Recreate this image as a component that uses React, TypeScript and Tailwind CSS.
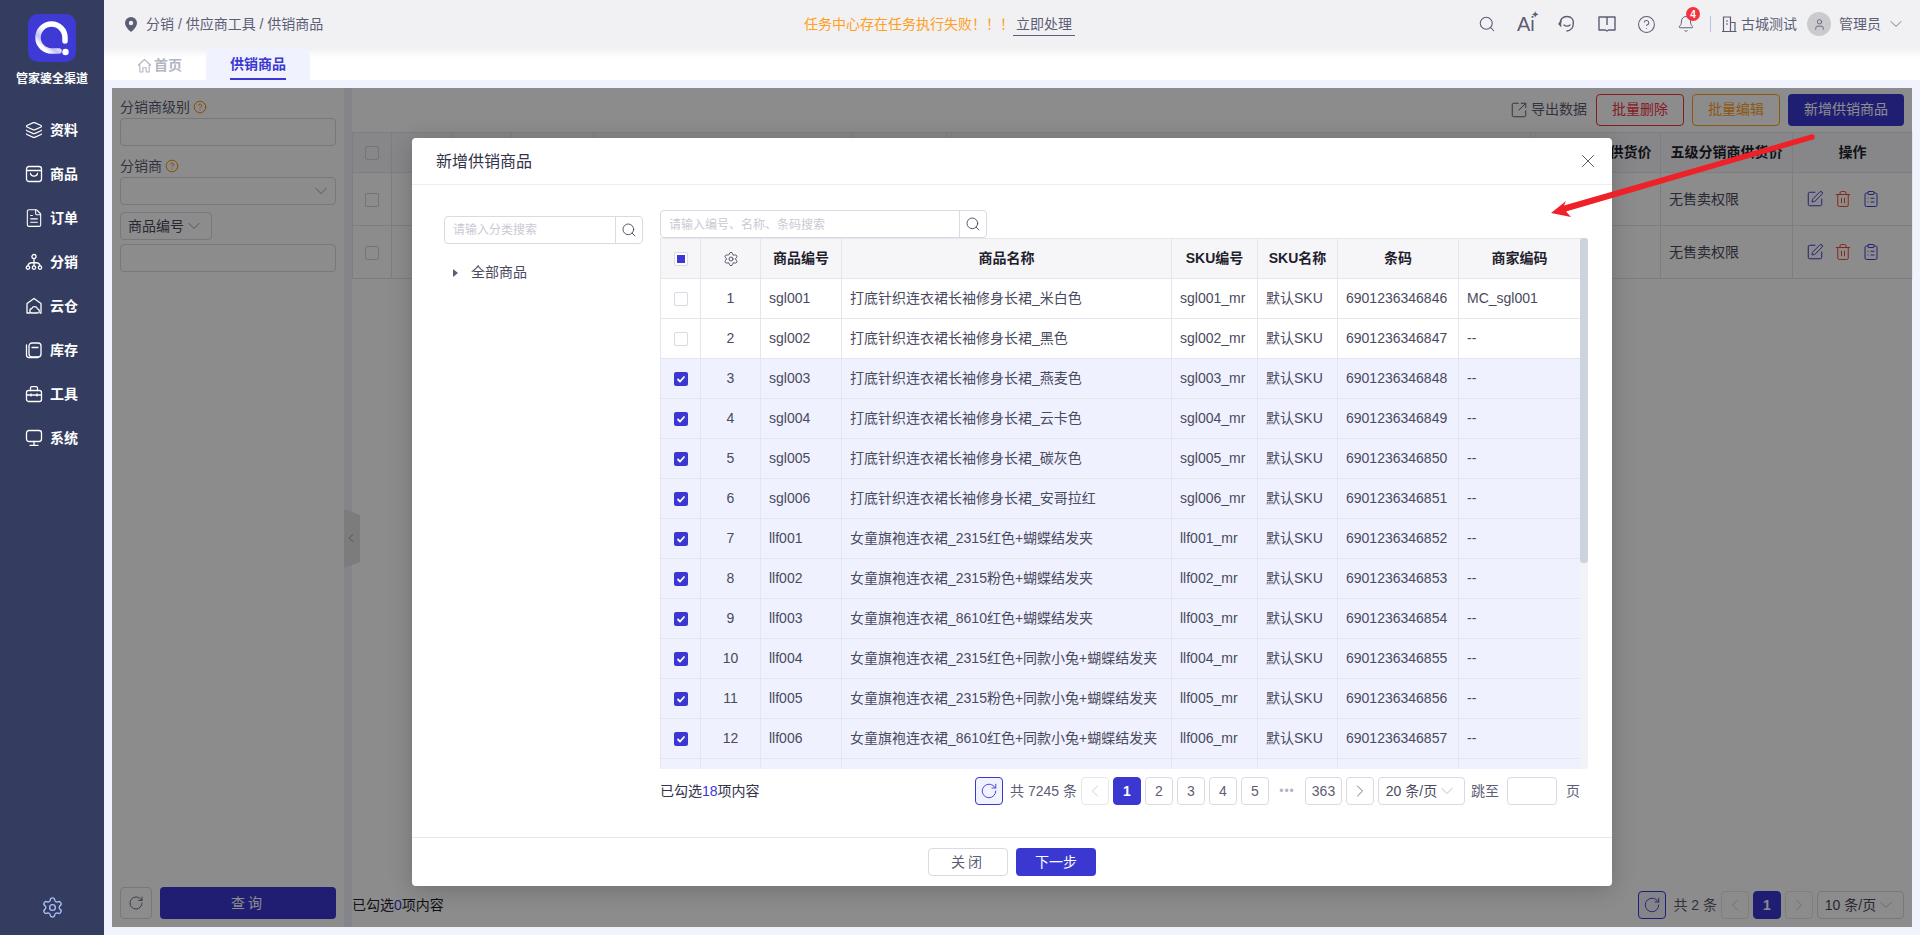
import { Bell, ChevronDown, ChevronLeft, ChevronRight, CircleHelp, FileText, Layers, Monitor, RotateCw, Search, Settings, SquareArrowOutUpRight, SquarePen, Trash2, ClipboardList, User, X } from 'lucide-react';
import type { ReactNode } from 'react';

const goods = [
  ['sgl001', '打底针织连衣裙长袖修身长裙_米白色', '6901236346846', 'MC_sgl001', false],
  ['sgl002', '打底针织连衣裙长袖修身长裙_黑色', '6901236346847', '--', false],
  ['sgl003', '打底针织连衣裙长袖修身长裙_燕麦色', '6901236346848', '--', true],
  ['sgl004', '打底针织连衣裙长袖修身长裙_云卡色', '6901236346849', '--', true],
  ['sgl005', '打底针织连衣裙长袖修身长裙_碳灰色', '6901236346850', '--', true],
  ['sgl006', '打底针织连衣裙长袖修身长裙_安哥拉红', '6901236346851', '--', true],
  ['llf001', '女童旗袍连衣裙_2315红色+蝴蝶结发夹', '6901236346852', '--', true],
  ['llf002', '女童旗袍连衣裙_2315粉色+蝴蝶结发夹', '6901236346853', '--', true],
  ['llf003', '女童旗袍连衣裙_8610红色+蝴蝶结发夹', '6901236346854', '--', true],
  ['llf004', '女童旗袍连衣裙_2315红色+同款小兔+蝴蝶结发夹', '6901236346855', '--', true],
  ['llf005', '女童旗袍连衣裙_2315粉色+同款小兔+蝴蝶结发夹', '6901236346856', '--', true],
  ['llf006', '女童旗袍连衣裙_8610红色+同款小兔+蝴蝶结发夹', '6901236346857', '--', true],
] as const;

function NavIcon({ children }: { children: ReactNode }) {
  return (
    <svg className="shrink-0" width="18" height="18" viewBox="0 0 18 18" fill="none" stroke="currentColor" strokeWidth="1.3" strokeLinecap="round" strokeLinejoin="round">
      {children}
    </svg>
  );
}

const navItems: { label: string; icon: ReactNode }[] = [
  { label: '资料', icon: <Layers className="shrink-0" size={18} strokeWidth={1.5} /> },
  { label: '商品', icon: <NavIcon><rect x="1.5" y="1.500" width="15" height="15" rx="2.5" /><path d="M1.5 5.5h15M5.5 8.5c.6 3.6 6.400 3.6 7 0" /></NavIcon> },
  { label: '订单', icon: <FileText className="shrink-0" size={20} strokeWidth={1.3} /> },
  { label: '分销', icon: <NavIcon><circle cx="9" cy="3.6" r="2.1" /><circle cx="3" cy="14.6" r="1.7" /><circle cx="9" cy="14.6" r="1.7" /><circle cx="15" cy="14.6" r="1.7" /><path d="M9 5.7v7.200M3 12.900c0-2.600 1.600-3.400 6-3.400s6 .8 6 3.400" /></NavIcon> },
  { label: '云仓', icon: <NavIcon><path d="M5 16H2V6.5L9 1.500l7 5V16h-1" /><path d="M6.500 16a2.300 2.300 0 0 1 .3-4.500 3 3 0 0 1 5.700.4 2.100 2.100 0 0 1 .3 4.100z" /></NavIcon> },
  { label: '库存', icon: <NavIcon><rect x="4" y="2" width="12" height="14" rx="3" /><path d="M7 6.500h6M1.500 4v10c0 1.500 1 2.500 2.500 2.500h9" /></NavIcon> },
  { label: '工具', icon: <NavIcon><rect x="1.500" y="5.500" width="15" height="11" rx="2" /><path d="M5.500 5.500V3c0-.8.6-1.400 1.400-1.400h4.200c.8 0 1.400.6 1.400 1.400v2.500M1.500 10h15M6 9v2M12 9v2" /></NavIcon> },
  { label: '系统', icon: <NavIcon><rect x="1.500" y="1.500" width="15" height="11" rx="2.500" /><path d="M9 12.500v3.500M5 16.300h8" /></NavIcon> },
];

function Sidebar() {
  return (
    <aside className="flex w-[104px] shrink-0 flex-col items-center bg-[#343d5f] text-white">
      <svg className="mt-[14px] shrink-0" width="48" height="48" viewBox="0 0 48 48">
        <defs>
          <linearGradient id="logoRing" x1="0.9" y1="0.1" x2="0.2" y2="0.9">
            <stop offset="0.45" stopColor="#ffffff" />
            <stop offset="0.8" stopColor="#c3c2f2" />
            <stop offset="1" stopColor="#ffffff" />
          </linearGradient>
        </defs>
        <rect width="48" height="48" rx="10" fill="#3f3ad6" />
        <path d="M37 27v-3.500A13.500 13.500 0 1 0 23.500 37H31" fill="none" stroke="url(#logoRing)" strokeWidth="5.5" strokeLinecap="round" />
        <circle cx="37.500" cy="38" r="3.200" fill="#fff" />
      </svg>
      <div className="mt-[9px] text-[12px] leading-4 font-bold">管家婆全渠道</div>
      <nav className="mt-[21px] ml-[2px] flex flex-col">
        {navItems.map((item) => (
          <div key={item.label} className="flex h-11 w-[56px] items-center gap-2">
            <span className="flex w-[17px] justify-center">{item.icon}</span>
            <span className="text-[14px] font-bold whitespace-nowrap">{item.label}</span>
          </div>
        ))}
      </nav>
      <Settings className="mt-auto mb-[16px] text-[#a9c1ff]" size={23} strokeWidth={1.4} />
    </aside>
  );
}

function HeaderBar() {
  return (
    <header className="flex h-12 shrink-0 items-center bg-[#f1f1f4] text-[14px] text-[#5d5d75]">
      <div className="flex w-[700px] items-center pl-[21px]">
        <svg width="12" height="15" viewBox="0 0 12 15" className="mr-[9px]">
          <path d="M6 0a6 6 0 0 1 6 6c0 3.600-4 7.400-6 9-2-1.600-6-5.400-6-9a6 6 0 0 1 6-6z" fill="#5d5d75" />
          <circle cx="6" cy="6" r="2.200" fill="#f1f1f4" />
        </svg>
        <span>分销 / 供应商工具 / 供销商品</span>
      </div>
      <div className="flex w-[280px] items-center">
        <span className="w-[209px] whitespace-nowrap text-[#ff9f1a]">任务中心存在任务执行失败！！！</span>
        <span className="border-b border-[#5d5d75] px-[3px] leading-[22px] whitespace-nowrap">立即处理</span>
      </div>
      <div className="flex flex-1 items-center pl-[394px]">
        <Search className="shrink-0" size={18} strokeWidth={1.4} />
        <span className="relative ml-[21px] w-[20px] text-[20px] leading-none">
          Ai
          <span className="absolute -top-[4px] left-[14px] text-[10px]">✦</span>
        </span>
        <svg className="ml-[21px] shrink-0" width="18" height="18" viewBox="0 0 18 18" fill="none" stroke="currentColor" strokeWidth="1.4" strokeLinecap="round">
          <path d="M2.500 9.500C1.500 4 5 1.500 9 1.500s7 2.500 6.300 7.500c-.3 3.500-2.500 6.500-6.300 7" />
          <path d="M3 6.500 1 9l2 2M6 10c1.500 1.500 4.500 1.500 6 0" />
        </svg>
        <svg className="ml-[22px] shrink-0" width="18" height="16" viewBox="0 0 18 16" fill="none" stroke="currentColor" strokeWidth="1.4" strokeLinejoin="round">
          <path d="M1 1h16v13H10.500L9 15l-1.500-1H1zM9 1v8" />
        </svg>
        <CircleHelp className="ml-[21px] shrink-0" size={19} strokeWidth={1.3} />
        <span className="relative ml-[21px] flex">
          <Bell size={18} strokeWidth={1.3} />
          <span className="absolute -top-[8px] left-[9px] flex h-[14px] w-[14px] items-center justify-center rounded-full bg-[#f5333f] text-[10px] font-bold text-white">4</span>
        </span>
        <span className="ml-[15px] h-4 w-px bg-[#b7c0e6]" />
        <svg className="ml-[10px] shrink-0" width="16" height="16" viewBox="0 0 16 16" fill="none" stroke="currentColor" strokeWidth="1.2">
          <path d="M1 15.500h14.500M2.500 15.500V1h7v14.500M9.500 6.500h4.500v9M5 5h2M5 8h2" />
        </svg>
        <span className="ml-[4px] whitespace-nowrap">古城测试</span>
        <span className="ml-[10px] flex h-6 w-6 shrink-0 items-center justify-center rounded-full bg-[#cbcbce]">
          <User size={13} strokeWidth={1.6} />
        </span>
        <span className="ml-2 whitespace-nowrap">管理员</span>
        <ChevronDown className="ml-[5px] shrink-0" size={20} strokeWidth={1} />
      </div>
    </header>
  );
}

function Tabs() {
  return (
    <div className="flex h-8 shrink-0 bg-[linear-gradient(#f1f1f4,#ffffff_10px)] pl-[33px] text-[14px]">
      <div className="flex w-[69px] items-center gap-[2px] pt-[2px] font-bold text-[#b2b5c2]">
        <svg width="15" height="15" viewBox="0 0 15 15" fill="none" stroke="#b2b5c2" strokeWidth="1.1" strokeLinejoin="round">
          <path d="M1 7.500 7.500 1.500l6.500 6M2.800 6.500v7.500h3V9.800h3.400V14h3V6.500" />
        </svg>
        <span className="whitespace-nowrap">首页</span>
      </div>
      <div className="flex w-[104px] justify-center rounded-t-[10px] bg-[#f0f2fd]">
        <span className="flex h-8 items-center border-b-2 border-[#3b38d2] pt-[2px] font-bold text-[#3b38d2]">供销商品</span>
      </div>
    </div>
  );
}

function Label({ text }: { text: string }) {
  return (
    <div className="mb-[2px] flex h-[18px] items-center gap-[3px] text-[14px] text-[#5d5d75]">
      {text}
      <CircleHelp className="text-[#f08c00]" size={14} strokeWidth={1.6} />
    </div>
  );
}

const bgCols = [39, 60, 60, 82, 258, 95, 584, 130, 132, 120];

function BackgroundRow() {
  return (
    <tr className="h-[53px]">
      <td className="border border-[#e5e6ec] text-center">
        <span className="inline-block h-[14px] w-[14px] rounded-[2px] border border-[#d5d6dd] align-middle" />
      </td>
      {[0, 1, 2, 3, 4, 5, 6].map((i) => (
        <td key={i} className="border border-[#e5e6ec]" />
      ))}
      <td className="border border-[#e5e6ec] pl-2 text-[#4a4a5e]">无售卖权限</td>
      <td className="border border-[#e5e6ec]">
        <div className="flex justify-center gap-[10px] pr-[20px]">
          <SquarePen className="text-[#3b38d2]" size={18} strokeWidth={1.3} />
          <Trash2 className="text-[#ee4b2b]" size={18} strokeWidth={1.3} />
          <ClipboardList className="text-[#3b38d2]" size={18} strokeWidth={1.3} />
        </div>
      </td>
    </tr>
  );
}

function PageBtn({ children, active, muted, className = 'w-7' }: { children?: ReactNode; active?: boolean; muted?: boolean; className?: string }) {
  return (
    <span
      className={`flex h-7 shrink-0 items-center justify-center rounded-[4px] border text-[14px] ${className} ${
        active ? 'border-[#3b38d2] bg-[#3b38d2] font-bold text-white' : muted ? 'border-[#e6e7ec] text-[#c4c5cf]' : 'border-[#d9dae2] text-[#5d5d75]'
      }`}
    >
      {children}
    </span>
  );
}

function Background() {
  return (
    <div className="flex h-full bg-[#f0f2fd]">
      <div className="flex w-[232px] flex-col bg-white px-2 pt-[10px] pb-2">
        <Label text="分销商级别" />
        <div className="h-7 rounded-[4px] border border-[#d9dae2]" />
        <div className="h-[11px]" />
        <Label text="分销商" />
        <div className="flex h-7 items-center justify-end rounded-[4px] border border-[#d9dae2] pr-1 text-[#8a8a98]">
          <ChevronDown size={20} strokeWidth={1} />
        </div>
        <div className="mt-[7px] flex h-7 w-[92px] items-center justify-center rounded-[4px] border border-[#d9dae2] text-[14px] text-[#4a4a5e]">
          商品编号
          <ChevronDown className="text-[#8a8a98]" size={20} strokeWidth={1} />
        </div>
        <div className="mt-1 h-7 rounded-[4px] border border-[#d9dae2]" />
        <div className="mt-auto flex gap-2">
          <span className="flex h-8 w-8 items-center justify-center rounded-[4px] border border-[#d9dae2] text-[#4a4a5e]">
            <RotateCw size={16} strokeWidth={1.2} />
          </span>
          <span className="flex h-8 flex-1 items-center justify-center rounded-[4px] bg-[#3b38d2] text-[14px] tracking-[3px] text-white">查询</span>
        </div>
      </div>
      <div className="w-2 shrink-0" />
      <div className="flex min-w-0 flex-1 flex-col bg-white text-[14px]">
        <div className="flex h-11 shrink-0 items-center justify-end gap-2 pr-2 pb-[1px]">
          <span className="mr-[1px] flex items-center gap-[3px] text-[#5d5d75]">
            <SquareArrowOutUpRight size={18} strokeWidth={1.3} />
            导出数据
          </span>
          <span className="flex h-8 w-[88px] items-center justify-center rounded-[4px] border border-[#f5333f] text-[#f5333f]">批量删除</span>
          <span className="flex h-8 w-[88px] items-center justify-center rounded-[4px] border border-[#ff9f1a] text-[#ff9f1a]">批量编辑</span>
          <span className="flex h-8 w-[116px] items-center justify-center rounded-[4px] bg-[#3b38d2] text-white">新增供销商品</span>
        </div>
        <table className="w-[1560px] table-fixed">
          <colgroup>
            {bgCols.map((w, i) => (
              <col key={i} style={{ width: w }} />
            ))}
          </colgroup>
          <thead>
            <tr className="h-10 bg-[#f6f6f9] font-bold text-[#1f1f2e]">
              <th className="border border-[#e5e6ec]">
                <span className="inline-block h-[14px] w-[14px] rounded-[2px] border border-[#d5d6dd] align-middle" />
              </th>
              {[0, 1, 2, 3, 4, 5].map((i) => (
                <th key={i} className="border border-[#e5e6ec]" />
              ))}
              <th className="border border-[#e5e6ec]">四级分销商供货价</th>
              <th className="border border-[#e5e6ec]">五级分销商供货价</th>
              <th className="border border-[#e5e6ec]">操作</th>
            </tr>
          </thead>
          <tbody>
            <BackgroundRow />
            <BackgroundRow />
          </tbody>
        </table>
        <div className="mt-auto flex items-center pr-2 pb-2">
          <span className="text-[#1f1f2e]">
            已勾选<span className="text-[#3b38d2]">0</span>项内容
          </span>
          <div className="ml-auto flex items-center gap-1">
            <span className="flex h-7 w-7 items-center justify-center rounded-[4px] border border-[#3b38d2] bg-[#f0f2fd] text-[#3b38d2]">
              <RotateCw size={18} strokeWidth={1.2} />
            </span>
            <span className="ml-[3px] text-[#5d5d75]">共 2 条</span>
            <PageBtn muted><ChevronLeft size={20} strokeWidth={1} /></PageBtn>
            <PageBtn active>1</PageBtn>
            <PageBtn muted><ChevronRight size={20} strokeWidth={1} /></PageBtn>
            <PageBtn className="w-[87px] !text-[#4a4a5e]">10 条/页<ChevronDown className="text-[#b2b5c2]" size={20} strokeWidth={1} /></PageBtn>
          </div>
        </div>
      </div>
    </div>
  );
}

function Check({ state }: { state: 'on' | 'off' | 'some' }) {
  if (state === 'on') {
    return (
      <span className="inline-flex h-[14px] w-[14px] items-center justify-center rounded-[2px] bg-[#3b38d2] align-middle">
        <svg width="10" height="10" viewBox="0 0 10 10" fill="none" stroke="#fff" strokeWidth="1.8">
          <path d="M1.500 5 4 7.500 8.500 2.500" />
        </svg>
      </span>
    );
  }
  return (
    <span className="inline-flex h-[14px] w-[14px] items-center justify-center rounded-[2px] border border-[#d9dae2] bg-white align-middle">
      {state === 'some' && <span className="h-2 w-2 bg-[#3b38d2]" />}
    </span>
  );
}

const cell = 'border border-[#e5e6ec] px-2 whitespace-nowrap';

function GoodsTable() {
  const widths = [40, 60, 81, 330, 86, 80, 121, 122];
  return (
    <div className="relative h-[531px] w-[928px] overflow-hidden">
      <table className="w-[920px] table-fixed text-[14px] text-[#4a4a5e]">
        <colgroup>
          {widths.map((w, i) => (
            <col key={i} style={{ width: w }} />
          ))}
        </colgroup>
        <thead>
          <tr className="h-10 bg-[#f6f6f9] font-bold text-[#1f1f2e]">
            <th className={`${cell} text-center`}><Check state="some" /></th>
            <th className={cell}><Settings className="mx-auto text-[#4a4a5e]" size={16} strokeWidth={1.4} /></th>
            <th className={cell}>商品编号</th>
            <th className={cell}>商品名称</th>
            <th className={cell}>SKU编号</th>
            <th className={cell}>SKU名称</th>
            <th className={cell}>条码</th>
            <th className={cell}>商家编码</th>
          </tr>
        </thead>
        <tbody>
          {goods.map(([code, name, barcode, shopCode, checked], i) => (
            <tr key={code} className={`h-10 ${checked ? 'bg-[#eff1fe]' : ''}`}>
              <td className={`${cell} text-center`}><Check state={checked ? 'on' : 'off'} /></td>
              <td className={`${cell} text-center`}>{i + 1}</td>
              <td className={cell}>{code}</td>
              <td className={cell}>{name}</td>
              <td className={cell}>{code}_mr</td>
              <td className={cell}>默认SKU</td>
              <td className={cell}>{barcode}</td>
              <td className={cell}>{shopCode}</td>
            </tr>
          ))}
          <tr className="h-10 bg-[#eff1fe]">
            {widths.map((w, i) => (
              <td key={i} className={cell} />
            ))}
          </tr>
        </tbody>
      </table>
      <div className="absolute top-0 right-0 flex h-full w-2 flex-col rounded-[3px] bg-[#f2f3f6]">
        <div className="h-[325px] rounded-[3px] bg-[#cdd3dc]" />
      </div>
    </div>
  );
}

function Modal() {
  return (
    <div className="absolute top-[50px] left-[300px] flex h-[748px] w-[1200px] flex-col rounded-[4px] bg-white text-[14px] text-[#4a4a5e] shadow-[0_4px_24px_rgba(0,0,0,0.2)]">
      <div className="flex h-[47px] shrink-0 items-center justify-between border-b border-[#eeeef2] pr-[13px] pl-6">
        <span className="pt-px text-[16px] text-[#33334a]">新增供销商品</span>
        <X size={22} strokeWidth={1} />
      </div>
      <div className="flex min-h-0 flex-1">
        <div className="w-[248px] shrink-0 pt-[31px] pl-8">
          <div className="flex h-7 w-[199px] rounded-[4px] border border-[#d9dae2]">
            <span className="flex-1 pl-2 text-[12px] leading-[27px] text-[#c9cad3]">请输入分类搜索</span>
            <span className="flex w-[27px] items-center justify-center border-l border-[#d9dae2]">
              <Search size={16} strokeWidth={1.4} />
            </span>
          </div>
          <div className="mt-[18px] flex items-center pl-[9px]">
            <span className="h-0 w-0 border-y-[4px] border-l-[5px] border-y-transparent border-l-[#5d5d75]" />
            <span className="ml-[13px]">全部商品</span>
          </div>
        </div>
        <div className="flex min-w-0 flex-1 flex-col pt-[25px]">
          <div className="flex h-7 w-[327px] shrink-0 rounded-[4px] border border-[#d9dae2]">
            <span className="flex-1 pl-2 text-[12px] leading-[29px] text-[#c9cad3]">请输入编号、名称、条码搜索</span>
            <span className="flex w-[27px] items-center justify-center border-l border-[#d9dae2]">
              <Search size={16} strokeWidth={1.4} />
            </span>
          </div>
          <GoodsTable />
          <div className="mt-2 flex h-7 w-[920px] items-center">
            <span className="text-[#33334a]">
              已勾选<span className="text-[#3b38d2]">18</span>项内容
            </span>
            <div className="ml-auto flex items-center gap-1">
              <span className="flex h-7 w-7 items-center justify-center rounded-[4px] border border-[#3b38d2] bg-[#f0f2fd] text-[#3b38d2]">
                <RotateCw size={18} strokeWidth={1.2} />
              </span>
              <span className="ml-[3px] text-[#5d5d75]">共 7245 条</span>
              <PageBtn muted><ChevronLeft size={20} strokeWidth={1} /></PageBtn>
              <PageBtn active>1</PageBtn>
              <PageBtn>2</PageBtn>
              <PageBtn>3</PageBtn>
              <PageBtn>4</PageBtn>
              <PageBtn>5</PageBtn>
              <span className="w-7 text-center text-[12px] tracking-[1px] text-[#b2b5c2]">•••</span>
              <PageBtn className="w-[37px]">363</PageBtn>
              <PageBtn><ChevronRight size={20} strokeWidth={1} /></PageBtn>
              <PageBtn className="w-[87px] !text-[#4a4a5e]">20 条/页<ChevronDown className="text-[#b2b5c2]" size={20} strokeWidth={1} /></PageBtn>
              <span className="ml-[2px] text-[#5d5d75]">跳至</span>
              <span className="ml-1 h-7 w-[50px] rounded-[4px] border border-[#d9dae2]" />
              <span className="ml-[5px] text-[#5d5d75]">页</span>
            </div>
          </div>
        </div>
      </div>
      <div className="flex h-[49px] shrink-0 items-start justify-center gap-2 border-t border-[#e5e6ec] pt-[10px]">
        <span className="flex h-7 w-20 items-center justify-center rounded-[4px] border border-[#d9dae2] tracking-[3px] text-[#5d5d75]">关闭</span>
        <span className="flex h-7 w-20 items-center justify-center rounded-[4px] bg-[#3b38d2] text-white">下一步</span>
      </div>
    </div>
  );
}

export default function App() {
  return (
    <div className="relative flex h-[935px] w-[1920px] overflow-hidden bg-[#f0f2fd] [font-family:'Liberation_Sans','Noto_Sans_CJK_SC',sans-serif]">
      <Sidebar />
      <main className="flex min-w-0 flex-1 flex-col">
        <HeaderBar />
        <Tabs />
        <div className="min-h-0 flex-1 p-2">
          <div className="relative h-full">
            <Background />
            <div className="absolute top-[421px] left-[232px] h-[59px] w-4 bg-[#e2e2e6] [clip-path:polygon(0_0,100%_10%,100%_90%,0_100%)]">
              <ChevronLeft className="mt-[22px] text-[#6a6a78]" size={14} strokeWidth={1} />
            </div>
            <div className="absolute inset-0 bg-black/45" />
            <Modal />
          </div>
        </div>
      </main>
      <svg className="pointer-events-none absolute top-0 left-0" width="1920" height="935">
        <polygon points="1811,134.500 1813,139.500 1566,211.500 1571,217 1551,213 1566,201 1564,205.500" fill="#ee2028" />
        <circle cx="1812" cy="137" r="2.700" fill="#ee2028" />
      </svg>
    </div>
  );
}
